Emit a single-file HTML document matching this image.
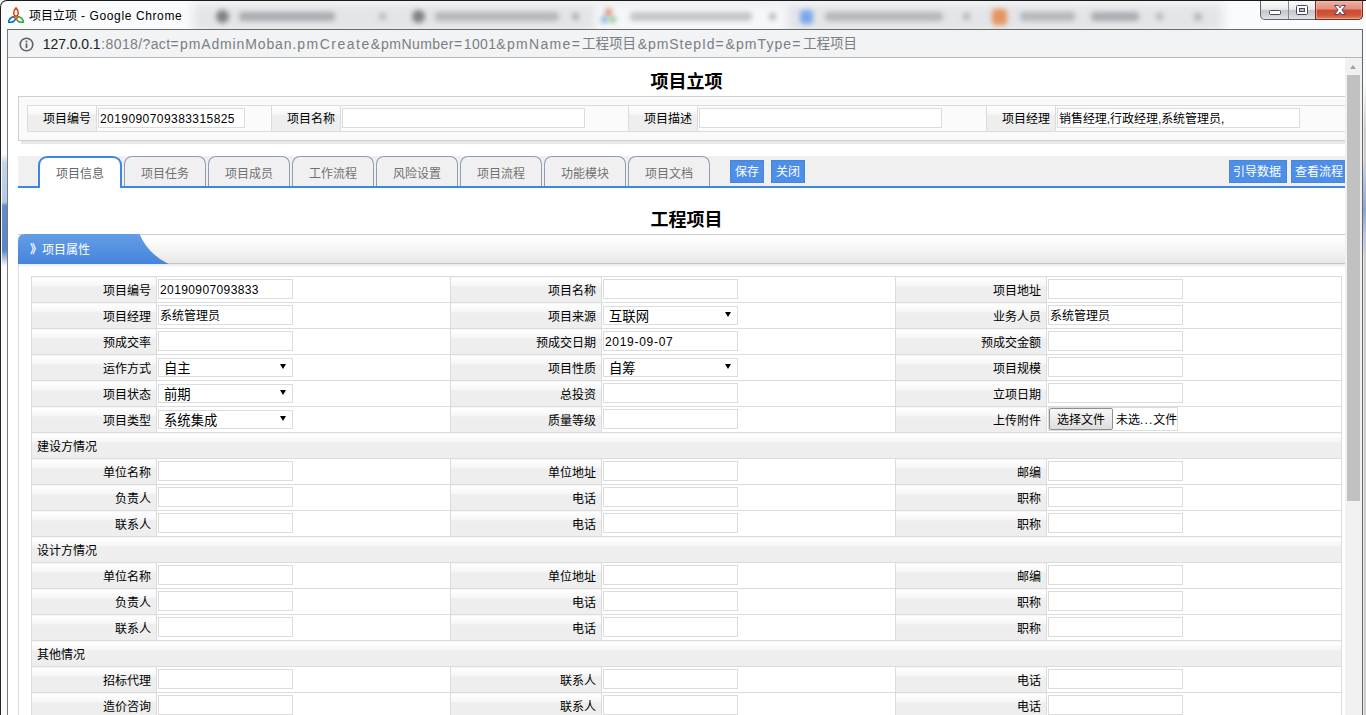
<!DOCTYPE html>
<html lang="zh-CN">
<head>
<meta charset="utf-8">
<title>项目立项</title>
<style>
html,body{margin:0;padding:0;}
body{width:1366px;height:715px;overflow:hidden;position:relative;background:#eef0f4;
  font-family:"Liberation Sans","Noto Sans CJK SC",sans-serif;font-size:12px;color:#000;}
*{box-sizing:border-box;}
.abs{position:absolute;}
/* window frame */
#frame{left:0;top:0;width:1366px;height:715px;background:#fafbfc;border-top:1px solid #1a1a1a;border-left:1px solid #222;border-top-left-radius:7px;}
#tbg{left:1px;top:1px;width:1365px;height:28px;overflow:hidden;}
.blob{position:absolute;filter:blur(2.5px);border-radius:4px;}
#title{left:29px;top:7px;height:18px;line-height:18px;font-size:12px;color:#000;white-space:nowrap;}
#caps{left:1260px;top:1px;width:103px;height:19px;border:1px solid #5c6470;border-top:none;border-radius:0 0 5px 5px;overflow:hidden;background:linear-gradient(#fbfbfc 0%,#e9eaec 46%,#c5c7cc 52%,#d2d4d8 80%,#e4e5e8 100%);}
#caps .b{position:absolute;top:0;height:18px;}
#caps .min{left:0;width:28px;border-right:1px solid #7f8794;}
#caps .max{left:28px;width:27px;border-right:1px solid #7f8794;}
#caps .cls{left:55px;width:47px;background:linear-gradient(#eeb0a2 0%,#e08f7d 45%,#cc4a30 50%,#d2573a 80%,#e08a66 100%);}
/* client */
#client{left:7px;top:29px;width:1356px;height:686px;border:1px solid #7a7a7a;border-top-color:#6a6a6a;border-right-color:#666;border-bottom:none;background:#fff;overflow:hidden;}
#addr{left:0;top:0;width:1354px;height:28px;background:#f1f3f4;border-bottom:1px solid #b6b6b6;}
#url{left:0;top:4px;height:20px;line-height:20px;font-size:14px;white-space:nowrap;color:#7a7f85;}
#url span{position:absolute;top:0;white-space:nowrap;}
#url span.d{color:#202124;}
#page{left:0;top:28px;width:1337px;height:657px;overflow:hidden;background:#fff;}
#sb{left:1337px;top:28px;width:17px;height:657px;background:#f1f1f1;}
#sb .th{position:absolute;left:2px;top:17px;width:13px;height:426px;background:#c1c1c1;}
#sb .up{position:absolute;left:5px;top:7px;width:0;height:0;border-left:3.5px solid transparent;border-right:3.5px solid transparent;border-bottom:4px solid #a3a3a3;}
h1.t{position:absolute;margin:0;font-size:18px;font-weight:bold;line-height:24px;width:200px;text-align:center;white-space:nowrap;}
/* header box */
#hbox{left:10px;top:38px;width:1400px;height:45px;border:1px solid #cfcfcf;background:#fafafa;box-shadow:3px 3px 0 #e9e9e9;}
#hbox .it{position:absolute;left:8px;top:8px;width:1400px;height:27px;border:1px solid #dcdcdc;background:#fbfbfb;}
#hbox .lb{position:absolute;top:0;height:25px;width:70px;line-height:27px;text-align:right;padding-right:5px;background:linear-gradient(#ffffff 0%,#f6f6f6 33%,#eeeeee 38%,#eeeeee 100%);border-left:1px solid #dcdcdc;border-right:1px solid #dcdcdc;}
#hbox .lb.first{border-left:none;}
#hbox .in{position:absolute;display:block;margin:0;top:2px;height:20px;border:1px solid #dcdcdc;background:#fff;line-height:20px;padding-left:2px;white-space:nowrap;overflow:hidden;letter-spacing:.43px;}
/* tab bar */
#tabs{left:10px;top:98px;width:1400px;height:32px;background:#f0f0f0;border-bottom:2px solid #3d85e8;}
.tab{position:absolute;top:0;height:30px;width:82px;border:1px solid #8e9db6;border-bottom:none;border-radius:8px 8px 0 0;background:#f0f0f0;color:#707070;text-align:center;line-height:34px;font-size:12px;}
.tab.on{top:0;height:32px;border:2px solid #3d85e8;border-bottom:none;background:#fff;color:#666;border-radius:9px 9px 0 0;line-height:33px;}
.btn{position:absolute;top:4px;height:23px;background:#4d8fe8;border:1px solid #4a86d8;color:#fff;font-size:12px;line-height:22px;text-align:center;white-space:nowrap;overflow:hidden;}
/* section header */
#sec{left:10px;top:176px;width:1400px;height:30px;border-top:1px solid #cbcbcb;border-bottom:1px solid #c6c6c6;background:linear-gradient(#ffffff 0%,#fbfbfb 25%,#f3f3f3 60%,#e8e8e8 100%);box-shadow:0 2px 2px #ececec;}
#sec svg{position:absolute;left:0;top:-1px;}
#sec .st{position:absolute;left:12px;top:1px;height:29px;line-height:29px;color:#fff;font-size:12px;white-space:nowrap;}
/* table */
#tb{left:23px;top:218px;width:1311px;border-collapse:collapse;table-layout:fixed;}
#tb td{border:1px solid #dcdcdc;height:26px;padding:0;vertical-align:middle;white-space:nowrap;}
#tb td.lb{text-align:right;padding-right:5px;background:linear-gradient(#ffffff 0%,#f6f6f6 33%,#eeeeee 38%,#eeeeee 100%);}
#tb td.vc{padding-left:1px;vertical-align:top;}
#tb tr.hd td{background:linear-gradient(#ffffff 0%,#f6f6f6 33%,#eeeeee 38%,#eeeeee 100%);padding-left:5px;}
.in{display:block;margin-top:2px;width:135px;height:20px;border:1px solid #dcdcdc;background:#fff;line-height:20px;padding-left:1px;font-size:12px;position:relative;white-space:nowrap;overflow:hidden;}
.dg{letter-spacing:.39px;}
.dt{letter-spacing:.7px;}
.sel{height:19px;margin-top:3px;font-size:13.33px;padding-left:5px;line-height:20px;}
.sel .ar{position:absolute;left:121px;top:5px;width:0;height:0;border-left:3.5px solid transparent;border-right:3.5px solid transparent;border-top:5.5px solid #000;}
.file{display:block;margin-top:0;width:130px;height:24px;border:1px solid #dddddd;background:#fff;white-space:nowrap;overflow:hidden;position:relative;}
.file .fb{position:absolute;left:0;top:0;width:64px;height:22px;border:1px solid #8f8f8f;border-radius:2px;background:linear-gradient(#f8f8f8,#dddddd);font-size:12px;line-height:22px;text-align:center;}
.file .ft{position:absolute;left:67px;top:1px;line-height:23px;font-size:12px;}
.file .ft i{font-style:normal;letter-spacing:1.1px;}
</style>
</head>
<body>
<div id="frame" class="abs"></div>
<div id="tbg" class="abs">
  <div class="blob" style="left:192px;top:2px;width:1030px;height:30px;background:#e3e5e8;filter:blur(5px);"></div>
  <div class="blob" style="left:594px;top:3px;width:192px;height:30px;background:#f6f7f8;filter:blur(4px);"></div>
  <div class="blob" style="left:215px;top:9px;width:13px;height:13px;background:#7d8085;border-radius:7px;"></div>
  <div class="blob" style="left:238px;top:11px;width:96px;height:9px;background:#a9acb1;"></div>
  <div class="blob" style="left:378px;top:12px;width:7px;height:7px;background:#b5b8bc;"></div>
  <div class="blob" style="left:411px;top:9px;width:13px;height:13px;background:#7d8085;border-radius:7px;"></div>
  <div class="blob" style="left:434px;top:11px;width:124px;height:9px;background:#b4b7bb;"></div>
  <div class="blob" style="left:571px;top:12px;width:7px;height:7px;background:#a9acb0;"></div>
  <div class="blob" style="left:604px;top:7px;width:7px;height:9px;background:#e8927e;"></div>
  <div class="blob" style="left:600px;top:15px;width:7px;height:7px;background:#7fb0e0;"></div>
  <div class="blob" style="left:608px;top:15px;width:7px;height:7px;background:#8fcb93;"></div>
  <div class="blob" style="left:629px;top:11px;width:122px;height:9px;background:#c3c5c9;"></div>
  <div class="blob" style="left:768px;top:12px;width:7px;height:7px;background:#b0b3b7;"></div>
  <div class="blob" style="left:799px;top:9px;width:13px;height:14px;background:#7aa7ec;"></div>
  <div class="blob" style="left:824px;top:11px;width:118px;height:9px;background:#b4b7bb;"></div>
  <div class="blob" style="left:962px;top:12px;width:7px;height:7px;background:#b0b3b7;"></div>
  <div class="blob" style="left:991px;top:8px;width:15px;height:16px;background:#e8935f;"></div>
  <div class="blob" style="left:1019px;top:11px;width:55px;height:9px;background:#b4b7bb;"></div>
  <div class="blob" style="left:1090px;top:11px;width:48px;height:9px;background:#a9acb1;"></div>
  <div class="blob" style="left:1155px;top:12px;width:7px;height:7px;background:#b0b3b7;"></div>
  <div class="blob" style="left:1193px;top:12px;width:8px;height:8px;background:#b0b3b7;"></div>
</div>
<svg class="abs" style="left:8px;top:7px;background:#fff" width="16" height="16" viewBox="0 0 16 16">
  <path id="pt" d="M8 0.900 C4.700 4.600 5.300 8.400 8 9.600 C10.700 8.400 11.300 4.600 8 0.900Z" fill="none" stroke="#e2481c" stroke-width="1.600" stroke-linejoin="round"/>
  <path d="M8 0.900 C4.700 4.600 5.300 8.400 8 9.600 C10.700 8.400 11.300 4.600 8 0.900Z" transform="rotate(-123 8 10.200)" fill="none" stroke="#0a70c8" stroke-width="1.600" stroke-linejoin="round"/>
  <path d="M8 0.900 C4.700 4.600 5.300 8.400 8 9.600 C10.700 8.400 11.300 4.600 8 0.900Z" transform="rotate(123 8 10.200)" fill="none" stroke="#3aa83f" stroke-width="1.600" stroke-linejoin="round"/>
  <circle cx="8" cy="10.200" r="2" fill="#e9422a"/><circle cx="8" cy="10.200" r="0.800" fill="#f7b425"/>
</svg>
<div class="abs" style="left:2px;top:154px;width:5px;height:112px;filter:blur(.6px);background:linear-gradient(rgba(190,208,234,0) 0%,rgba(196,212,235,1) 8%,rgba(180,200,230,1) 43%,rgba(98,140,204,1) 46%,rgba(90,134,202,1) 86%,rgba(90,134,202,0) 100%);"></div>
<div class="abs" style="left:1363px;top:85px;width:3px;height:630px;background:linear-gradient(90deg,#eaeaea 0,#eaeaea 33%,#cbcbcb 34%,#cbcbcb 100%);-webkit-mask-image:linear-gradient(transparent 0,#000 45px);mask-image:linear-gradient(transparent 0,#000 45px);"></div>
<div class="abs" style="left:1363px;top:160px;width:3px;height:100px;background:linear-gradient(rgba(170,188,220,0) 0%,rgba(185,200,228,1) 15%,rgba(140,165,210,1) 50%,rgba(185,200,228,1) 75%,rgba(185,200,228,0) 100%);"></div>
<div id="title" class="abs">项目立项<span style="letter-spacing:.62px"> - Google Chrome</span></div>
<div id="caps" class="abs">
  <div class="b min"><svg width="28" height="18"><rect x="8.500" y="9.500" width="11" height="4" rx="1" fill="#fff" stroke="#434a62"/></svg></div>
  <div class="b max"><svg width="27" height="18"><rect x="7.500" y="4.500" width="11" height="9" rx="1" fill="#fff" stroke="#434a62"/><rect x="10.500" y="7.500" width="5" height="3" fill="#b9bec7" stroke="#434a62"/></svg></div>
  <div class="b cls"><svg width="47" height="18"><path transform="translate(18.500 4.500)" d="M0 0 h3.700 l1.800 2.300 l1.800 -2.300 h3.700 l-3.600 4.500 l3.600 4.500 h-3.700 l-1.800 -2.300 l-1.800 2.300 h-3.700 l3.600 -4.500z" fill="#fff" stroke="#50455a" stroke-width="1" stroke-linejoin="round"/></svg></div>
</div>
<div class="abs" style="left:1315px;top:1px;width:48px;height:19px;border:1px solid #7b2c20;border-top:none;border-radius:0 0 5px 0;box-shadow:inset 0 0 0 1px rgba(255,200,185,.45)"></div>

<div id="client" class="abs">
  <div id="addr" class="abs">
    <svg class="abs" style="left:11px;top:7px" width="15" height="15" viewBox="0 0 15 15"><circle cx="7.500" cy="7.500" r="6.300" fill="none" stroke="#5f6368" stroke-width="1.600"/><rect x="6.600" y="6.400" width="1.800" height="4.700" fill="#5f6368"/><rect x="6.600" y="3.600" width="1.800" height="1.800" fill="#5f6368"/></svg>
    <div id="url" class="abs"><span class="d" style="left:34.8px;letter-spacing:-0.09px;">127.0.0.1</span><span style="left:93.3px;letter-spacing:0.38px;">:8018/?act=</span><span style="left:172.0px;letter-spacing:0.87px;">pmAdminMoban.</span><span style="left:289.3px;letter-spacing:1.49px;">pmCreate&amp;</span><span style="left:373.0px;letter-spacing:0.47px;">pmNumber=</span><span style="left:455.8px;letter-spacing:0.35px;">1001&amp;</span><span style="left:499.0px;letter-spacing:1.31px;">pmName=</span><span style="left:574.0px;font-size:13.5px;">工程项目</span><span style="left:629.7px;letter-spacing:0.95px;">&amp;pmStepId=</span><span style="left:717.6px;letter-spacing:1.07px;">&amp;pmType=</span><span style="left:795.0px;font-size:13.5px;">工程项目</span></div>
  </div>
  <div id="page" class="abs">
    <h1 class="t" style="left:578.5px;top:12px;">项目立项</h1>
    <div id="hbox" class="abs">
      <div class="it">
        <div class="lb first" style="left:0;width:69px;">项目编号</div>
        <div class="in" style="left:70px;width:147px;padding-left:1px;">2019090709383315825</div>
        <div class="lb" style="left:243px;">项目名称</div>
        <div class="in" style="left:314px;width:243px;"></div>
        <div class="lb" style="left:600px;">项目描述</div>
        <div class="in" style="left:671px;width:243px;"></div>
        <div class="lb" style="left:958px;">项目经理</div>
        <div class="in" style="left:1029px;width:243px;letter-spacing:-.05px;padding-left:1px;">销售经理,行政经理,系统管理员,</div>
      </div>
    </div>
    <div id="tabs" class="abs">
      <div class="tab on" style="left:20px;width:84px;">项目信息</div>
      <div class="tab" style="left:106px;">项目任务</div>
      <div class="tab" style="left:190px;">项目成员</div>
      <div class="tab" style="left:274px;">工作流程</div>
      <div class="tab" style="left:358px;">风险设置</div>
      <div class="tab" style="left:442px;">项目流程</div>
      <div class="tab" style="left:526px;">功能模块</div>
      <div class="tab" style="left:610px;">项目文档</div>
      <div class="btn" style="left:712px;width:34px;">保存</div>
      <div class="btn" style="left:753px;width:34px;">关闭</div>
      <div class="btn" style="left:1211px;width:58px;padding-right:2px;">引导数据</div>
      <div class="btn" style="left:1273px;width:58px;padding-right:2px;">查看流程</div>
    </div>
    <h1 class="t" style="left:578.5px;top:150px;">工程项目</h1>
    <div id="sec" class="abs">
      <svg width="160" height="30" viewBox="0 0 160 30"><defs><linearGradient id="g" x1="0" y1="0" x2="0" y2="1"><stop offset="0" stop-color="#649de6"/><stop offset="1" stop-color="#4585dc"/></linearGradient></defs><path d="M0 30 V7 Q0 0 7 0 H121.500 Q130 20 150.500 30 Z" fill="url(#g)"/></svg>
      <div class="st"><b>》</b>项目属性</div>
    </div>
    <div class="abs" style="left:10px;top:206px;width:1px;height:460px;background:#dcdcdc"></div>
    <table id="tb" class="abs">
      <colgroup><col style="width:125px"><col style="width:294px"><col style="width:151px"><col style="width:294px"><col style="width:151px"><col style="width:295px"></colgroup>
<tr><td class="lb">项目编号</td><td class="vc"><span class="in dg">20190907093833</span></td><td class="lb">项目名称</td><td class="vc"><span class="in"></span></td><td class="lb">项目地址</td><td class="vc"><span class="in"></span></td></tr>
<tr><td class="lb">项目经理</td><td class="vc"><span class="in">系统管理员</span></td><td class="lb">项目来源</td><td class="vc"><span class="in sel">互联网<i class="ar"></i></span></td><td class="lb">业务人员</td><td class="vc"><span class="in">系统管理员</span></td></tr>
<tr><td class="lb">预成交率</td><td class="vc"><span class="in"></span></td><td class="lb">预成交日期</td><td class="vc"><span class="in dt">2019-09-07</span></td><td class="lb">预成交金额</td><td class="vc"><span class="in"></span></td></tr>
<tr><td class="lb">运作方式</td><td class="vc"><span class="in sel">自主<i class="ar"></i></span></td><td class="lb">项目性质</td><td class="vc"><span class="in sel">自筹<i class="ar"></i></span></td><td class="lb">项目规模</td><td class="vc"><span class="in"></span></td></tr>
<tr><td class="lb">项目状态</td><td class="vc"><span class="in sel">前期<i class="ar"></i></span></td><td class="lb">总投资</td><td class="vc"><span class="in"></span></td><td class="lb">立项日期</td><td class="vc"><span class="in"></span></td></tr>
<tr><td class="lb">项目类型</td><td class="vc"><span class="in sel">系统集成<i class="ar"></i></span></td><td class="lb">质量等级</td><td class="vc"><span class="in"></span></td><td class="lb">上传附件</td><td class="vc"><span class="file"><span class="fb">选择文件</span><span class="ft">未选<i>...</i>文件</span></span></td></tr>
<tr class="hd"><td colspan="6">建设方情况</td></tr>
<tr><td class="lb">单位名称</td><td class="vc"><span class="in"></span></td><td class="lb">单位地址</td><td class="vc"><span class="in"></span></td><td class="lb">邮编</td><td class="vc"><span class="in"></span></td></tr>
<tr><td class="lb">负责人</td><td class="vc"><span class="in"></span></td><td class="lb">电话</td><td class="vc"><span class="in"></span></td><td class="lb">职称</td><td class="vc"><span class="in"></span></td></tr>
<tr><td class="lb">联系人</td><td class="vc"><span class="in"></span></td><td class="lb">电话</td><td class="vc"><span class="in"></span></td><td class="lb">职称</td><td class="vc"><span class="in"></span></td></tr>
<tr class="hd"><td colspan="6">设计方情况</td></tr>
<tr><td class="lb">单位名称</td><td class="vc"><span class="in"></span></td><td class="lb">单位地址</td><td class="vc"><span class="in"></span></td><td class="lb">邮编</td><td class="vc"><span class="in"></span></td></tr>
<tr><td class="lb">负责人</td><td class="vc"><span class="in"></span></td><td class="lb">电话</td><td class="vc"><span class="in"></span></td><td class="lb">职称</td><td class="vc"><span class="in"></span></td></tr>
<tr><td class="lb">联系人</td><td class="vc"><span class="in"></span></td><td class="lb">电话</td><td class="vc"><span class="in"></span></td><td class="lb">职称</td><td class="vc"><span class="in"></span></td></tr>
<tr class="hd"><td colspan="6">其他情况</td></tr>
<tr><td class="lb">招标代理</td><td class="vc"><span class="in"></span></td><td class="lb">联系人</td><td class="vc"><span class="in"></span></td><td class="lb">电话</td><td class="vc"><span class="in"></span></td></tr>
<tr><td class="lb">造价咨询</td><td class="vc"><span class="in"></span></td><td class="lb">联系人</td><td class="vc"><span class="in"></span></td><td class="lb">电话</td><td class="vc"><span class="in"></span></td></tr>
<tr><td class="lb">监理单位</td><td class="vc"><span class="in"></span></td><td class="lb">联系人</td><td class="vc"><span class="in"></span></td><td class="lb">电话</td><td class="vc"><span class="in"></span></td></tr>
    </table>
  </div>
  <div id="sb" class="abs"><div class="up"></div><div class="th"></div></div>
</div>
</body>
</html>
